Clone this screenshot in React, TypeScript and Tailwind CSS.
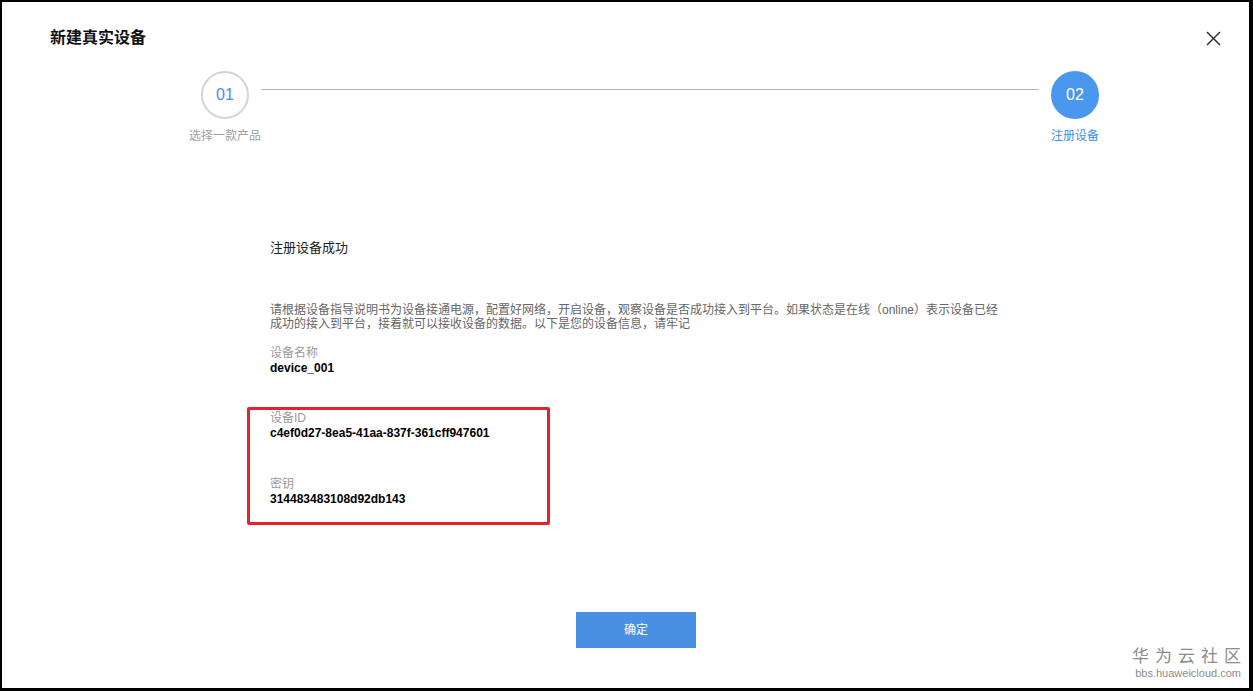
const font = { fontFamily: '"Liberation Sans", "Noto Sans CJK SC", sans-serif' };

function CloseIcon() {
  return (
    <svg width="15" height="15" viewBox="0 0 15 15" fill="none">
      <path d="M1 1L14 14M14 1L1 14" stroke="#333" strokeWidth="1.5" />
    </svg>
  );
}

function Step({ num, label, active }: { num: string; label: string; active?: boolean }) {
  return (
    <div className="flex w-[48px] flex-col items-center">
      <div
        className={
          active
            ? "flex h-[48px] w-[48px] items-center justify-center rounded-full bg-[#4a97f0] text-[16px] text-white"
            : "flex h-[48px] w-[48px] items-center justify-center rounded-full border-2 border-[#d4d4d4] text-[16px] text-[#4a8fe0]"
        }
      >
        {num}
      </div>
      <div className={`mt-[10px] whitespace-nowrap text-[12px] leading-[14px] ${active ? "text-[#3d8ee8]" : "text-[#a0a0a0]"}`}>
        {label}
      </div>
    </div>
  );
}

function Field({ label, value, className = "" }: { label: string; value: string; className?: string }) {
  return (
    <div className={className}>
      <div className="text-[12px] leading-[15px] text-[#9a9a9a]">{label}</div>
      <div className="text-[12px] font-bold leading-[15px] text-black">{value}</div>
    </div>
  );
}

export default function App() {
  return (
    <div className="h-[691px] w-[1253px] bg-black pb-[3px] pl-[2px] pr-[4px] pt-[2px]" style={font}>
      <div className="relative h-full w-full bg-white">
        {/* header */}
        <div className="flex items-center justify-between pl-[48px] pr-[28px] pt-[25px]">
          <div className="text-[16px] font-bold leading-[22px] text-[#111]">新建真实设备</div>
          <CloseIcon />
        </div>

        {/* steps */}
        <div className="ml-[199px] mt-[22px] flex w-[898px] items-start">
          <Step num="01" label="选择一款产品" />
          <div className="mx-[12px] mt-[18px] h-px flex-1 bg-[#b5b5b5]" />
          <Step num="02" label="注册设备" active />
        </div>

        {/* content */}
        <div className="ml-[268px] mt-[96px]">
          <div className="text-[13px] leading-[18px] text-[#222]">注册设备成功</div>
          <div className="mt-[46px] text-[12px] leading-[14px] text-[#666]">
            <div>请根据设备指导说明书为设备接通电源，配置好网络，开启设备，观察设备是否成功接入到平台。如果状态是在线（online）表示设备已经</div>
            <div>成功的接入到平台，接着就可以接收设备的数据。以下是您的设备信息，请牢记</div>
          </div>
          <Field label="设备名称" value="device_001" className="mt-[15px]" />

          <div className="-ml-[23px] mt-[31px] h-[118px] w-[303px] rounded-[2px] border-[3px] border-[#e3222e] pl-[20px] pt-[1px]">
            <Field label="设备ID" value="c4ef0d27-8ea5-41aa-837f-361cff947601" />
            <Field label="密钥" value="314483483108d92db143" className="mt-[36px]" />
          </div>
        </div>

        <button className="ml-[574px] mt-[87px] h-[36px] w-[120px] bg-[#4a90e2] text-[12px] text-white">
          确定
        </button>

        {/* watermark */}
        <div className="absolute bottom-[8px] right-[8px] flex flex-col items-end text-[#8c8c8c]">
          <div className="mr-[-6px] text-[17px] leading-[20px] tracking-[6px]">华为云社区</div>
          <div className="text-[11px] leading-[13px]">bbs.huaweicloud.com</div>
        </div>
      </div>
    </div>
  );
}
